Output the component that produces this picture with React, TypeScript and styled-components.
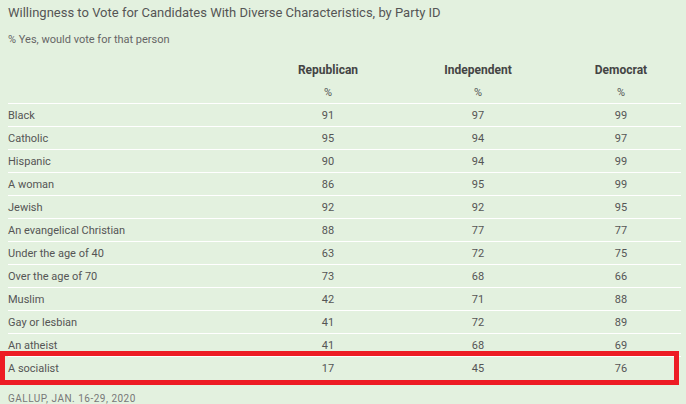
import React from 'react'
import styled, { createGlobalStyle } from 'styled-components'

const GlobalStyle = createGlobalStyle`
    html, body {
        margin: 0;
        padding: 0;
        background: #e3f1df;
    }
    body {
        font-family: Roboto, "Liberation Sans", Arial, sans-serif;
        color: #555;
    }
`

const Page = styled.div`
    width: 686px;
    height: 404px;
    padding: 4px 5px 0 8px;
    box-sizing: border-box;
    overflow: hidden;
`

const Title = styled.h1`
    margin: 0;
    font-size: 13px;
    font-weight: 400;
    line-height: 17px;
    color: #555;
`

const Subtitle = styled.div`
    margin-top: 12px;
    font-size: 11px;
    line-height: 14px;
    color: #666;
`

const Table = styled.div`
    margin-top: 12px;
    display: flex;
    flex-direction: column;
`

const COLUMNS = '253px 134px 166px 120px'

const HeadRow = styled.div<{ $bold?: boolean }>`
    display: grid;
    grid-template-columns: ${COLUMNS};
    height: 22px;
    align-items: center;
    font-size: ${p => (p.$bold ? '12px' : '11px')};
    font-weight: ${p => (p.$bold ? 700 : 400)};
    color: ${p => (p.$bold ? '#444' : '#555')};
    border-bottom: ${p => (p.$bold ? 'none' : '1px solid #fff')};
`

const Row = styled.div<{ $highlight?: boolean }>`
    position: relative;
    display: grid;
    grid-template-columns: ${COLUMNS};
    height: 22px;
    align-items: center;
    font-size: 11px;
    color: #555;
    border-bottom: ${p => (p.$highlight ? 'none' : '1px solid #fff')};

    &::after {
        content: '';
        display: ${p => (p.$highlight ? 'block' : 'none')};
        position: absolute;
        top: -6px;
        left: -8px;
        right: 2px;
        bottom: -6px;
        border: 5px solid #ed1c24;
    }
`

const Cell = styled.div<{ $label?: boolean }>`
    text-align: ${p => (p.$label ? 'left' : 'center')};
    white-space: nowrap;
`

const Source = styled.div`
    margin-top: 14px;
    font-size: 10px;
    letter-spacing: 0.5px;
    text-transform: uppercase;
    color: #777;
`

const ROWS: [string, number, number, number][] = [
    ['Black', 91, 97, 99],
    ['Catholic', 95, 94, 97],
    ['Hispanic', 90, 94, 99],
    ['A woman', 86, 95, 99],
    ['Jewish', 92, 92, 95],
    ['An evangelical Christian', 88, 77, 77],
    ['Under the age of 40', 63, 72, 75],
    ['Over the age of 70', 73, 68, 66],
    ['Muslim', 42, 71, 88],
    ['Gay or lesbian', 41, 72, 89],
    ['An atheist', 41, 68, 69],
    ['A socialist', 17, 45, 76],
]

const App: React.FC = () => {
    return (
        <Page>
            <GlobalStyle />
            <Title>Willingness to Vote for Candidates With Diverse Characteristics, by Party ID</Title>
            <Subtitle>% Yes, would vote for that person</Subtitle>
            <Table>
                <HeadRow $bold>
                    <Cell $label />
                    <Cell>Republican</Cell>
                    <Cell>Independent</Cell>
                    <Cell>Democrat</Cell>
                </HeadRow>
                <HeadRow>
                    <Cell $label />
                    <Cell>%</Cell>
                    <Cell>%</Cell>
                    <Cell>%</Cell>
                </HeadRow>
                {ROWS.map(([label, rep, ind, dem], i) => (
                    <Row key={label} $highlight={i === ROWS.length - 1}>
                        <Cell $label>{label}</Cell>
                        <Cell>{rep}</Cell>
                        <Cell>{ind}</Cell>
                        <Cell>{dem}</Cell>
                    </Row>
                ))}
            </Table>
            <Source>Gallup, Jan. 16-29, 2020</Source>
        </Page>
    )
}

export default App
